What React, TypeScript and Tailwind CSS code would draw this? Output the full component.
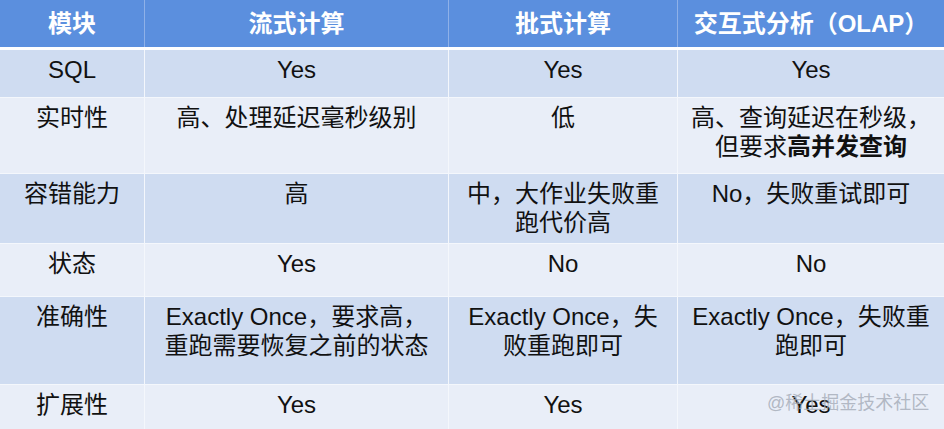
import React from "react";

const font = { fontFamily: '"Liberation Sans", Arial, "Noto Sans CJK SC", sans-serif' };

type Row = { h: string; bg: string; cells: React.ReactNode[] };

const DARK = "bg-[#cfdcf1]";
const LIGHT = "bg-[#e9eef8]";

const rows: Row[] = [
  { h: "h-[47px]", bg: DARK, cells: ["SQL", "Yes", "Yes", "Yes"] },
  {
    h: "h-[75px]",
    bg: LIGHT,
    cells: [
      "实时性",
      "高、处理延迟毫秒级别",
      "低",
      <>
        高、查询延迟在秒级，
        <br />
        但要求<b className="font-bold">高并发查询</b>
      </>,
    ],
  },
  {
    h: "h-[69px]",
    bg: DARK,
    cells: [
      "容错能力",
      "高",
      <>
        中，大作业失败重
        <br />
        跑代价高
      </>,
      "No，失败重试即可",
    ],
  },
  { h: "h-[52px]", bg: LIGHT, cells: ["状态", "Yes", "No", "No"] },
  {
    h: "h-[87px]",
    bg: DARK,
    cells: [
      "准确性",
      <>
        Exactly Once，要求高，
        <br />
        重跑需要恢复之前的状态
      </>,
      <>
        Exactly Once，失
        <br />
        败重跑即可
      </>,
      <>
        Exactly Once，失败重
        <br />
        跑即可
      </>,
    ],
  },
  { h: "h-[49px]", bg: LIGHT, cells: ["扩展性", "Yes", "Yes", "Yes"] },
];

const cols = "grid grid-cols-[144px_303px_228px_1fr] gap-x-[1px]";

export default function App() {
  return (
    <div className="relative w-[944px] h-[429px] overflow-hidden bg-[#f4f7fc]" style={font}>
      <div className={`${cols} h-[47px] bg-[#8fb1e8]`}>
        {["模块", "流式计算", "批式计算", "交互式分析（OLAP）"].map((t, i) => (
          <div
            key={i}
            className="flex items-center justify-center bg-[#5b8fde] text-white font-bold text-[24px] leading-[28px] whitespace-nowrap"
          >
            {t}
          </div>
        ))}
      </div>
      <div className="h-[3px] bg-white" />
      <div className="flex flex-col gap-y-[1px] bg-[#f4f7fc]">
        {rows.map((r, ri) => (
          <div key={ri} className={`${cols} ${r.h}`}>
            {r.cells.map((c, ci) => (
              <div
                key={ci}
                className={`${r.bg} pt-[5px] text-center text-[#111111] text-[24px] leading-[29px] whitespace-nowrap`}
              >
                {c}
              </div>
            ))}
          </div>
        ))}
      </div>
      <div className="absolute left-[767px] top-[391px] text-[18px] leading-[24px] text-[#a3aab6]/80 whitespace-nowrap">
        @稀土掘金技术社区
      </div>
    </div>
  );
}
